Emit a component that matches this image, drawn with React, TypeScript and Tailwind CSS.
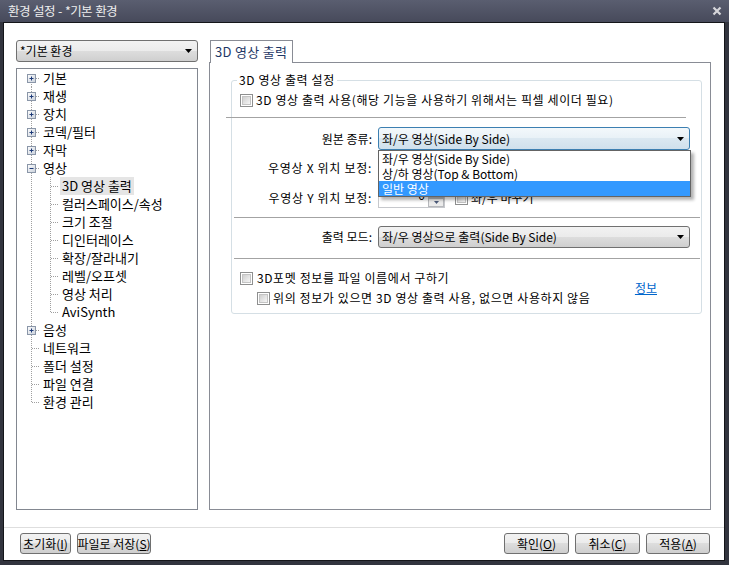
import React from "react";

const Arrow = () => (
  <svg width="7" height="4" viewBox="0 0 7 4" className="shrink-0">
    <path d="M0 0H7L3.5 4Z" fill="#000" />
  </svg>
);

const Check = () => (
  <span className="block w-[13px] h-[13px] shrink-0 border border-[#8e8f8f] bg-white p-px">
    <span className="block w-full h-full border border-[#c4c4c4] bg-gradient-to-br from-[#cfcfcf] to-[#f6f6f6]" />
  </span>
);

type RowProps = {
  text: string;
  level: 0 | 1;
  exp?: "+" | "-";
  first?: boolean;
  last?: boolean;
  childLast?: boolean;
  selected?: boolean;
};

function Expander({ kind }: { kind: "+" | "-" }) {
  return (
    <g>
      <defs>
        <linearGradient id="eg" x1="0" y1="0" x2="1" y2="1">
          <stop offset="0" stopColor="#ffffff" />
          <stop offset="1" stopColor="#c9d0da" />
        </linearGradient>
      </defs>
      <rect x="10.5" y="5.5" width="8" height="8" fill="url(#eg)" stroke="#8a96a8" />
      <path d="M12.5 9.5H16.5" stroke="#1d3a78" />
      {kind === "+" && <path d="M14.5 7.5V11.5" stroke="#1d3a78" />}
    </g>
  );
}

function TreeRow({ text, level, exp, first, last, childLast, selected }: RowProps) {
  const w = level === 0 ? 23 : 42;
  return (
    <div className="flex h-[18px] items-center">
      <svg width={w} height="18" className="shrink-0">
        {level === 0 ? (
          <>
            <path
              d={`M14.5 ${first ? 9 : 0}V${last ? 10 : 18}`}
              stroke="#a0a0a0"
              strokeDasharray="1 1"
            />
            <path d="M15 9.5H23" stroke="#a0a0a0" strokeDasharray="1 1" />
            {exp && <Expander kind={exp} />}
          </>
        ) : (
          <>
            <path d="M14.5 0V18" stroke="#a0a0a0" strokeDasharray="1 1" />
            <path d={`M33.5 0V${childLast ? 10 : 18}`} stroke="#a0a0a0" strokeDasharray="1 1" />
            <path d="M34 9.5H42" stroke="#a0a0a0" strokeDasharray="1 1" />
          </>
        )}
      </svg>
      <span
        className={`ml-[1px] px-[2px] h-[18px] leading-[18px] whitespace-nowrap ${
          selected ? "bg-[#e5e5e5]" : ""
        }`}
      >
        {text}
      </span>
    </div>
  );
}

function Btn({ w, label, acc }: { w: string; label: string; acc: string }) {
  return (
    <div
      className={`${w} h-[21px] flex items-center justify-center rounded-[3px] border border-[#707070] bg-[linear-gradient(#f2f2f2,#ebebeb_50%,#dddddd_50%,#cfcfcf)] text-[12px] leading-none`}
    >
      <span className="whitespace-nowrap">
        {label}(<u>{acc}</u>)
      </span>
    </div>
  );
}

function Combo({ text, focused }: { text: string; focused?: boolean }) {
  return (
    <div
      className={`w-full h-full flex items-center justify-between pl-[3px] pr-[5px] rounded-[3px] border ${
        focused
          ? "border-[#3c7fb1] bg-[linear-gradient(#f3f8fb,#e8f1f7_50%,#dbe8f1_50%,#cfe0ec)]"
          : "border-[#707070] bg-[linear-gradient(#f2f2f2,#ebebeb_50%,#dddddd_50%,#cfcfcf)]"
      }`}
    >
      <span className="whitespace-nowrap">{text}</span>
      <Arrow />
    </div>
  );
}

export default function App() {
  const tree: RowProps[] = [
    { text: "기본", level: 0, exp: "+", first: true },
    { text: "재생", level: 0, exp: "+" },
    { text: "장치", level: 0, exp: "+" },
    { text: "코덱/필터", level: 0, exp: "+" },
    { text: "자막", level: 0, exp: "+" },
    { text: "영상", level: 0, exp: "-" },
    { text: "3D 영상 출력", level: 1, selected: true },
    { text: "컬러스페이스/속성", level: 1 },
    { text: "크기 조절", level: 1 },
    { text: "디인터레이스", level: 1 },
    { text: "확장/잘라내기", level: 1 },
    { text: "레벨/오프셋", level: 1 },
    { text: "영상 처리", level: 1 },
    { text: "AviSynth", level: 1, childLast: true },
    { text: "음성", level: 0, exp: "+" },
    { text: "네트워크", level: 0 },
    { text: "폴더 설정", level: 0 },
    { text: "파일 연결", level: 0 },
    { text: "환경 관리", level: 0, last: true },
  ];

  return (
    <div className="w-[729px] h-[565px] bg-[#32343e] flex flex-col font-['Noto_Sans_CJK_KR',sans-serif] text-[12px] text-black">
      {/* title bar */}
      <div className="h-[22px] shrink-0 flex items-center justify-between pl-[8px] pr-[7px] bg-gradient-to-b from-[#5a5e70] to-[#474a5b] text-[#eeeeee] text-[12.5px]">
        <span className="leading-none tracking-[-0.6px] [word-spacing:1px]">환경 설정 - *기본 환경</span>
        <svg width="10" height="10" viewBox="0 0 10 10">
          <path d="M1.5 1.5L8.5 8.5M8.5 1.5L1.5 8.5" stroke="#d6d6da" strokeWidth="2.2" />
        </svg>
      </div>

      {/* body */}
      <div className="flex-1 ml-[3px] mr-[4px] mb-[4px] border border-[#141519] bg-white flex flex-col">
        <div className="flex pt-[17px] pl-[12px] h-[487px] shrink-0">
          {/* left column */}
          <div className="w-[182px] flex flex-col">
            <div className="h-[22px] shrink-0">
              <Combo text="*기본 환경" />
            </div>
            <div className="mt-[6px] flex-1 border border-[#828790] text-[13px]">
              {tree.map((r) => (
                <TreeRow key={r.text} {...r} />
              ))}
            </div>
          </div>

          {/* right column */}
          <div className="ml-[11px] w-[502px] flex flex-col">
            <div className="relative z-10 ml-[1px] w-[83px] h-[23px] shrink-0 bg-white border border-b-0 border-[#898c95] pl-[4px] flex items-center text-[#1e3766] text-[13px] tracking-[0.3px] whitespace-nowrap">
              3D 영상 출력
            </div>
            <div className="-mt-px flex-1 border border-[#898c95] pl-[21px] pt-[17px]">
              {/* group box */}
              <div className="relative w-[471px] border border-[#d5dfe5] rounded-[3px] flex flex-col pb-[8px]">
                <span className="absolute -top-[9px] left-[5px] bg-white px-[2px] leading-[16px] tracking-[0.6px] whitespace-nowrap">
                  3D 영상 출력 설정
                </span>

                <div className="mt-[12px] h-[14px] pl-[8px] flex items-center">
                  <Check />
                  <span className="ml-[3px] whitespace-nowrap tracking-[0.6px]">
                    3D 영상 출력 사용(해당 기능을 사용하기 위해서는 픽셀 세이더 필요)
                  </span>
                </div>

                <div className="mt-[10px] -ml-[6px] w-[460px] h-px bg-[#a3a3a3]" />

                {/* 원본 종류 */}
                <div className="relative z-20 mt-[9px] h-[23px] flex items-center">
                  <span className="w-[140px] text-right whitespace-nowrap">원본 종류:</span>
                  <div className="ml-[6px] w-[312px] h-full">
                    <Combo text="좌/우 영상(Side By Side)" focused />
                  </div>
                  <div className="absolute left-[146px] top-[23px] w-[313px] border border-[#646464] bg-white shadow-[3px_3px_3px_rgba(0,0,0,0.3)] flex flex-col">
                    <div className="h-[15px] pl-[3px] leading-[15px] whitespace-nowrap">좌/우 영상(Side By Side)</div>
                    <div className="h-[15px] pl-[3px] leading-[15px] whitespace-nowrap">상/하 영상(Top &amp; Bottom)</div>
                    <div className="h-[15px] pl-[3px] leading-[15px] whitespace-nowrap bg-[#3399ff] text-white">일반 영상</div>
                  </div>
                </div>

                {/* X */}
                <div className="mt-[8px] h-[20px] flex items-center">
                  <span className="w-[140px] text-right whitespace-nowrap tracking-[0.7px]">우영상 X 위치 보정:</span>
                </div>

                {/* Y */}
                <div className="mt-[10px] h-[20px] flex items-center">
                  <span className="w-[140px] text-right whitespace-nowrap tracking-[0.7px]">우영상 Y 위치 보정:</span>
                  <div className="ml-[6px] w-[67px] h-[20px] border border-[#c6c8cc] flex">
                    <span className="flex-1 text-right pr-[3px] leading-[12px]">0</span>
                    <div className="w-[16px] flex flex-col">
                      <div className="flex-1 border border-[#b6b8bc] bg-[#ebebeb]" />
                      <div className="flex-1 border border-[#b6b8bc] bg-[#ebebeb] flex items-center justify-center">
                        <svg width="5" height="3" viewBox="0 0 5 3">
                          <path d="M0 0H5L2.5 3Z" fill="#4a5a7a" />
                        </svg>
                      </div>
                    </div>
                  </div>
                  <div className="ml-[10px]">
                    <Check />
                  </div>
                  <span className="ml-[3px] whitespace-nowrap">좌/우 바꾸기</span>
                </div>

                <div className="mt-[9px] ml-[2px] w-[466px] h-px bg-[#a3a3a3]" />

                {/* 출력 모드 */}
                <div className="mt-[8px] h-[22px] flex items-center">
                  <span className="w-[140px] text-right whitespace-nowrap">출력 모드:</span>
                  <div className="ml-[6px] w-[312px] h-full">
                    <Combo text="좌/우 영상으로 출력(Side By Side)" />
                  </div>
                </div>

                <div className="mt-[10px] ml-[2px] w-[466px] h-px bg-[#a3a3a3]" />

                <div className="mt-[12px] flex items-center">
                  <div className="flex flex-col">
                    <div className="h-[14px] pl-[8px] flex items-center">
                      <Check />
                      <span className="ml-[4px] whitespace-nowrap tracking-[0.6px]">3D포멧 정보를 파일 이름에서 구하기</span>
                    </div>
                    <div className="mt-[6px] h-[14px] pl-[25px] flex items-center">
                      <Check />
                      <span className="ml-[3px] whitespace-nowrap tracking-[0.6px]">
                        위의 정보가 있으면 3D 영상 출력 사용, 없으면 사용하지 않음
                      </span>
                    </div>
                  </div>
                  <span className="ml-auto mr-[44px] text-[#0066cc] underline">정보</span>
                </div>
              </div>
            </div>
          </div>
        </div>

        <div className="mt-[17px] h-px bg-[#dedede] shrink-0" />

        <div className="mt-[5px] h-[21px] flex pl-[16px] pr-[14px]">
          <Btn w="w-[51px]" label="초기화" acc="I" />
          <div className="ml-[6px]">
            <Btn w="w-[74px]" label="파일로 저장" acc="S" />
          </div>
          <div className="ml-auto flex gap-[6px]">
            <Btn w="w-[65px]" label="확인" acc="O" />
            <Btn w="w-[65px]" label="취소" acc="C" />
            <Btn w="w-[64px]" label="적용" acc="A" />
          </div>
        </div>
      </div>
    </div>
  );
}
